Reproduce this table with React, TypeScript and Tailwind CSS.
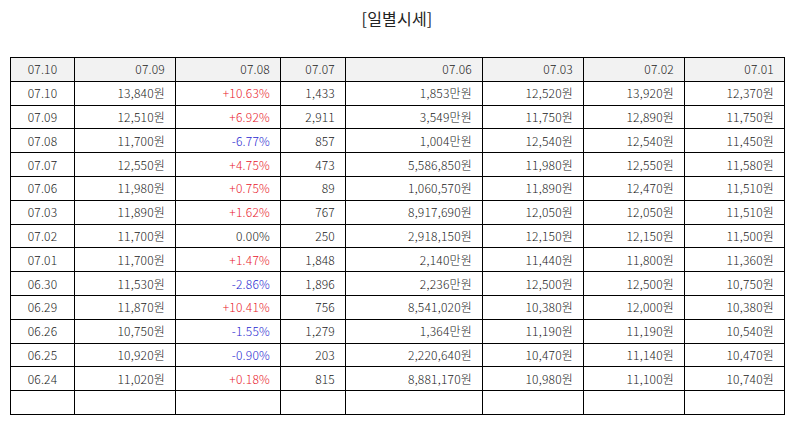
const rows: [string, string, string, string, string, string, string, string][] = [
  ["07.10", "13,840원", "+10.63%", "1,433", "1,853만원", "12,520원", "13,920원", "12,370원"],
  ["07.09", "12,510원", "+6.92%", "2,911", "3,549만원", "11,750원", "12,890원", "11,750원"],
  ["07.08", "11,700원", "-6.77%", "857", "1,004만원", "12,540원", "12,540원", "11,450원"],
  ["07.07", "12,550원", "+4.75%", "473", "5,586,850원", "11,980원", "12,550원", "11,580원"],
  ["07.06", "11,980원", "+0.75%", "89", "1,060,570원", "11,890원", "12,470원", "11,510원"],
  ["07.03", "11,890원", "+1.62%", "767", "8,917,690원", "12,050원", "12,050원", "11,510원"],
  ["07.02", "11,700원", "0.00%", "250", "2,918,150원", "12,150원", "12,150원", "11,500원"],
  ["07.01", "11,700원", "+1.47%", "1,848", "2,140만원", "11,440원", "11,800원", "11,360원"],
  ["06.30", "11,530원", "-2.86%", "1,896", "2,236만원", "12,500원", "12,500원", "10,750원"],
  ["06.29", "11,870원", "+10.41%", "756", "8,541,020원", "10,380원", "12,000원", "10,380원"],
  ["06.26", "10,750원", "-1.55%", "1,279", "1,364만원", "11,190원", "11,190원", "10,540원"],
  ["06.25", "10,920원", "-0.90%", "203", "2,220,640원", "10,470원", "11,140원", "10,470원"],
  ["06.24", "11,020원", "+0.18%", "815", "8,881,170원", "10,980원", "11,100원", "10,740원"],
];

const header = ["07.10", "07.09", "07.08", "07.07", "07.06", "07.03", "07.02", "07.01"];
const widths = ["w-[64px]", "w-[101px]", "w-[105px]", "w-[65px]", "w-[137px]", "w-[101px]", "w-[101px]", "w-[100px]"];

// up = red, down = blue, flat = plain
function rateColor(v: string) {
  if (v.startsWith("+")) return "text-[#e8202c]";
  if (v.startsWith("-")) return "text-[#2828d0]";
  return "text-[#222]";
}

function Cell({ i, children, className = "" }: { i: number; children?: React.ReactNode; className?: string }) {
  return (
    <td
      className={`h-[23.8px] border border-black p-0 leading-none ${
        i === 0 ? "text-center" : "pr-[10px] text-right"
      } ${className}`}
    >
      {children}
    </td>
  );
}

export default function App() {
  return (
    <div
      className="h-[425px] w-[794px] bg-white text-[12px] font-light tracking-[0.2px] text-[#222]"
      style={{ fontFamily: '"Noto Sans CJK KR", "Noto Sans", sans-serif' }}
    >
      <h1 className="pt-[6px] text-center text-[16px] leading-[24px] font-normal text-[#222]">[일별시세]</h1>
      <div className="px-[10px] pt-[27px]">
        <table className="w-[774px] table-fixed border-collapse border border-black">
          <colgroup>
            {widths.map((w, i) => (
              <col key={i} className={w} />
            ))}
          </colgroup>
          <thead>
            <tr className="bg-[#f2f2f2]">
              {header.map((h, i) => (
                <Cell key={i} i={i}>
                  {h}
                </Cell>
              ))}
            </tr>
          </thead>
          <tbody>
            {rows.map((r) => (
              <tr key={r[0]}>
                {r.map((v, i) => (
                  <Cell key={i} i={i} className={i === 2 ? rateColor(v) : ""}>
                    {v}
                  </Cell>
                ))}
              </tr>
            ))}
            <tr>
              {header.map((_, i) => (
                <Cell key={i} i={i} />
              ))}
            </tr>
          </tbody>
        </table>
      </div>
    </div>
  );
}
